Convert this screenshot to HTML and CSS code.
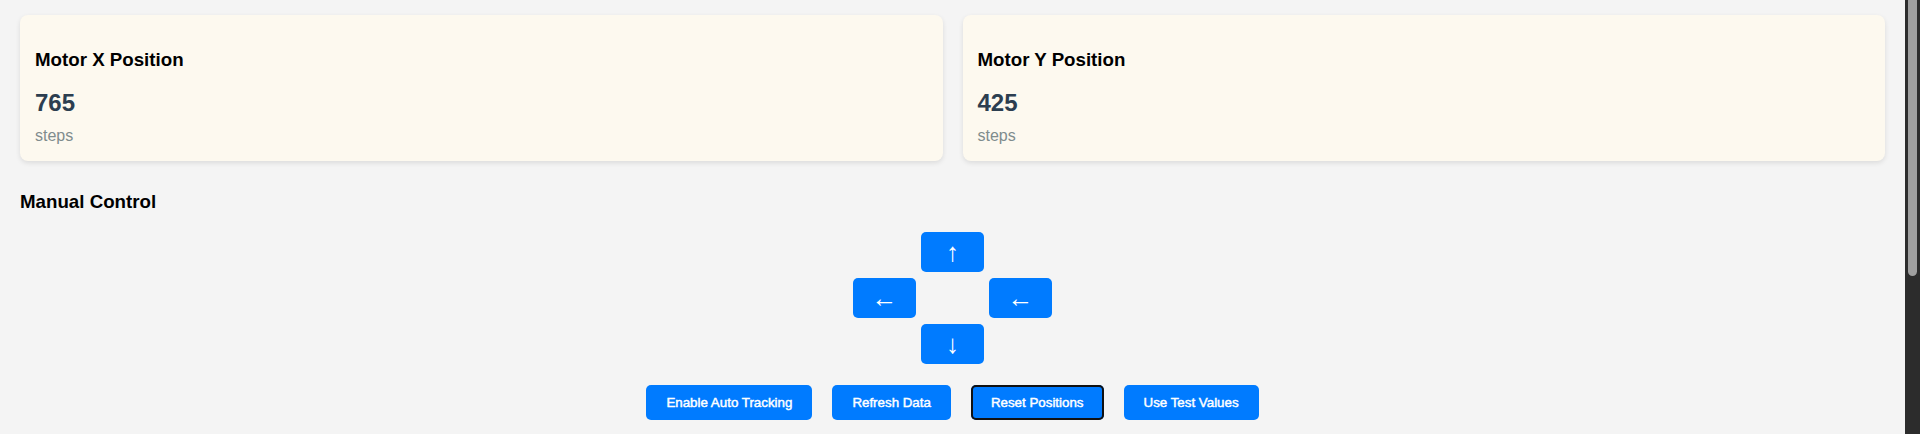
FILE: index.html
```html
<!DOCTYPE html>
<html lang="en">
<head>
<meta charset="utf-8">
<title>Motor Control</title>
<link rel="stylesheet" href="styles.css">
</head>
<body>
<main class="page">
  <section class="cards">
    <div class="card">
      <h3 class="card-title">Motor X Position</h3>
      <div class="card-value">765</div>
      <div class="card-unit">steps</div>
    </div>
    <div class="card">
      <h3 class="card-title">Motor Y Position</h3>
      <div class="card-value">425</div>
      <div class="card-unit">steps</div>
    </div>
  </section>

  <h3 class="section-title">Manual Control</h3>
  <div class="dpad">
    <span class="dpad-empty"></span>
    <button class="arrow">↑</button>
    <span class="dpad-empty"></span>
    <button class="arrow">←</button>
    <span class="dpad-empty"></span>
    <button class="arrow">←</button>
    <span class="dpad-empty"></span>
    <button class="arrow">↓</button>
    <span class="dpad-empty"></span>
  </div>

  <div class="actions">
    <button class="action">Enable Auto Tracking</button>
    <button class="action">Refresh Data</button>
    <button class="action focused">Reset Positions</button>
    <button class="action">Use Test Values</button>
  </div>
</main>
<div class="scrollbar" aria-hidden="true">
  <div class="scrollbar-thumb"></div>
</div>
</body>
</html>
```

FILE: styles.css
```css
html {
  height: 100%;
  background: #f4f4f4;
}
body {
  margin: 0;
  height: 100%;
  overflow: hidden;
  display: flex;
  background: #f4f4f4;
  font-family: "Liberation Sans", Arial, sans-serif;
  color: #000;
}
.page {
  flex: 1;
  min-width: 0;
  padding: 15px 20px 15px;
}
.scrollbar {
  flex: 0 0 15px;
  background: #2c2c2c;
  display: flex;
  justify-content: center;
}
.scrollbar-thumb {
  width: 9px;
  height: 276px;
  background: #9f9f9f;
  border-radius: 0 0 5px 5px;
}
.cards {
  display: grid;
  grid-template-columns: 1fr 1fr;
  gap: 20px;
  margin-bottom: 30px;
}
.card {
  background: #fdf9ef;
  border-radius: 8px;
  padding: 15px 15px 16px;
  box-shadow: 0 2px 5px rgba(0, 0, 0, 0.1);
}
.card-title {
  font-size: 18.72px;
  font-weight: bold;
  margin: 18.72px 0;
}
.card-value {
  font-size: 24px;
  font-weight: bold;
  color: #2c3e50;
}
.card-unit {
  font-size: 16px;
  color: #7f8c8d;
  margin-top: 10px;
}
.section-title {
  font-size: 18.72px;
  font-weight: bold;
  margin: 18.72px 0;
}
.dpad {
  display: grid;
  grid-template-columns: repeat(3, 63px);
  grid-template-rows: repeat(3, 40px);
  column-gap: 5px;
  row-gap: 6px;
  justify-content: center;
  margin-top: 2px;
}
.arrow {
  border: none;
  border-radius: 5px;
  background: #007bff;
  color: #fff;
  font-family: "Liberation Sans", Arial, sans-serif;
  font-size: 26px;
  padding: 0;
  cursor: pointer;
}
.actions {
  display: flex;
  justify-content: center;
  gap: 20px;
  margin-top: 21px;
}
.action {
  border: none;
  border-radius: 5px;
  background: #007bff;
  color: #fff;
  font-family: "Liberation Sans", Arial, sans-serif;
  font-weight: normal;
  font-size: 13.333px;
  -webkit-text-stroke: 0.45px #fff;
  height: 35px;
  padding: 0 20px;
  cursor: pointer;
}
.action.focused {
  box-shadow: inset 0 0 0 2px #111;
}
```
